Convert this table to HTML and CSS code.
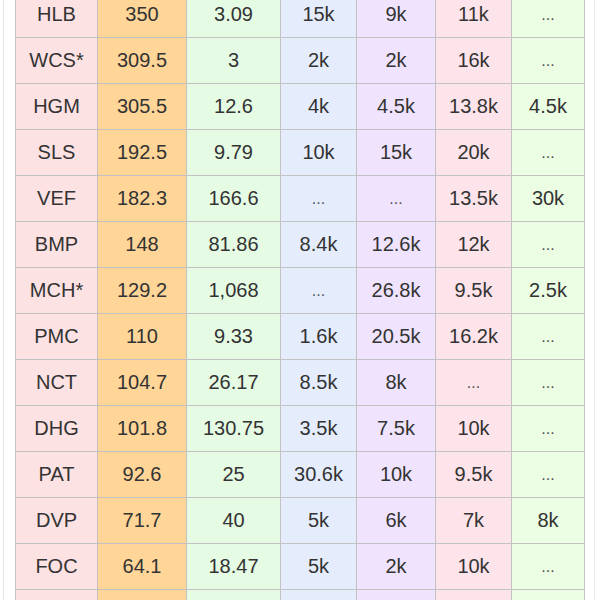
FILE: index.html
```html
<!DOCTYPE html>
<html>
<head>
<meta charset="utf-8">
<link rel="stylesheet" href="styles.css">
</head>
<body>
<div class="page">
  <table class="grid">
    <colgroup>
      <col class="w1"><col class="w2"><col class="w3"><col class="w4"><col class="w5"><col class="w6"><col class="w7">
    </colgroup>
    <tbody>
      <tr><td class="c1">HLB</td><td class="c2">350</td><td class="c3">3.09</td><td class="c4">15k</td><td class="c5">9k</td><td class="c6">11k</td><td class="c7 dots">...</td></tr>
      <tr><td class="c1">WCS*</td><td class="c2">309.5</td><td class="c3">3</td><td class="c4">2k</td><td class="c5">2k</td><td class="c6">16k</td><td class="c7 dots">...</td></tr>
      <tr><td class="c1">HGM</td><td class="c2">305.5</td><td class="c3">12.6</td><td class="c4">4k</td><td class="c5">4.5k</td><td class="c6">13.8k</td><td class="c7">4.5k</td></tr>
      <tr><td class="c1">SLS</td><td class="c2">192.5</td><td class="c3">9.79</td><td class="c4">10k</td><td class="c5">15k</td><td class="c6">20k</td><td class="c7 dots">...</td></tr>
      <tr><td class="c1">VEF</td><td class="c2">182.3</td><td class="c3">166.6</td><td class="c4 dots">...</td><td class="c5 dots">...</td><td class="c6">13.5k</td><td class="c7">30k</td></tr>
      <tr><td class="c1">BMP</td><td class="c2">148</td><td class="c3">81.86</td><td class="c4">8.4k</td><td class="c5">12.6k</td><td class="c6">12k</td><td class="c7 dots">...</td></tr>
      <tr><td class="c1">MCH*</td><td class="c2">129.2</td><td class="c3">1,068</td><td class="c4 dots">...</td><td class="c5">26.8k</td><td class="c6">9.5k</td><td class="c7">2.5k</td></tr>
      <tr><td class="c1">PMC</td><td class="c2">110</td><td class="c3">9.33</td><td class="c4">1.6k</td><td class="c5">20.5k</td><td class="c6">16.2k</td><td class="c7 dots">...</td></tr>
      <tr><td class="c1">NCT</td><td class="c2">104.7</td><td class="c3">26.17</td><td class="c4">8.5k</td><td class="c5">8k</td><td class="c6 dots">...</td><td class="c7 dots">...</td></tr>
      <tr><td class="c1">DHG</td><td class="c2">101.8</td><td class="c3">130.75</td><td class="c4">3.5k</td><td class="c5">7.5k</td><td class="c6">10k</td><td class="c7 dots">...</td></tr>
      <tr><td class="c1">PAT</td><td class="c2">92.6</td><td class="c3">25</td><td class="c4">30.6k</td><td class="c5">10k</td><td class="c6">9.5k</td><td class="c7 dots">...</td></tr>
      <tr><td class="c1">DVP</td><td class="c2">71.7</td><td class="c3">40</td><td class="c4">5k</td><td class="c5">6k</td><td class="c6">7k</td><td class="c7">8k</td></tr>
      <tr><td class="c1">FOC</td><td class="c2">64.1</td><td class="c3">18.47</td><td class="c4">5k</td><td class="c5">2k</td><td class="c6">10k</td><td class="c7 dots">...</td></tr>
      <tr><td class="c1">&nbsp;</td><td class="c2">&nbsp;</td><td class="c3">&nbsp;</td><td class="c4">&nbsp;</td><td class="c5">&nbsp;</td><td class="c6">&nbsp;</td><td class="c7">&nbsp;</td></tr>
    </tbody>
  </table>
</div>
</body>
</html>
```

FILE: styles.css
```css
html, body {
  margin: 0;
  padding: 0;
  background: #ffffff;
  overflow: hidden;
}
.page {
  width: 592px;
  height: 600px;
  margin-left: 3px;
  border-left: 1px solid #e4e4e4;
  border-right: 1px solid #ececec;
  padding-left: 11px;
  box-sizing: border-box;
  overflow: hidden;
}
.grid {
  border-collapse: collapse;
  table-layout: fixed;
  width: 569px;
  margin-top: -9px;
  font-family: "Liberation Sans", Arial, sans-serif;
  font-size: 20px;
  color: #333333;
}
.w1 { width: 82px; }
.w2 { width: 89px; }
.w3 { width: 94px; }
.w4 { width: 76px; }
.w5 { width: 79px; }
.w6 { width: 76px; }
.w7 { width: 73px; }
.grid td {
  height: 45px;
  padding: 0;
  text-align: center;
  vertical-align: middle;
  border: 1px solid #c2c2c2;
  white-space: nowrap;
  overflow: hidden;
}
.grid .dots {
  font-size: 16px;
  color: #555555;
}
.c1 { background: #fde2e3; }
.c2 { background: #ffd598; }
.c3 { background: #e6fbe4; }
.c4 { background: #e5edfd; }
.c5 { background: #efe3fd; }
.c6 { background: #fde3ea; }
.c7 { background: #ebfde3; }
```
